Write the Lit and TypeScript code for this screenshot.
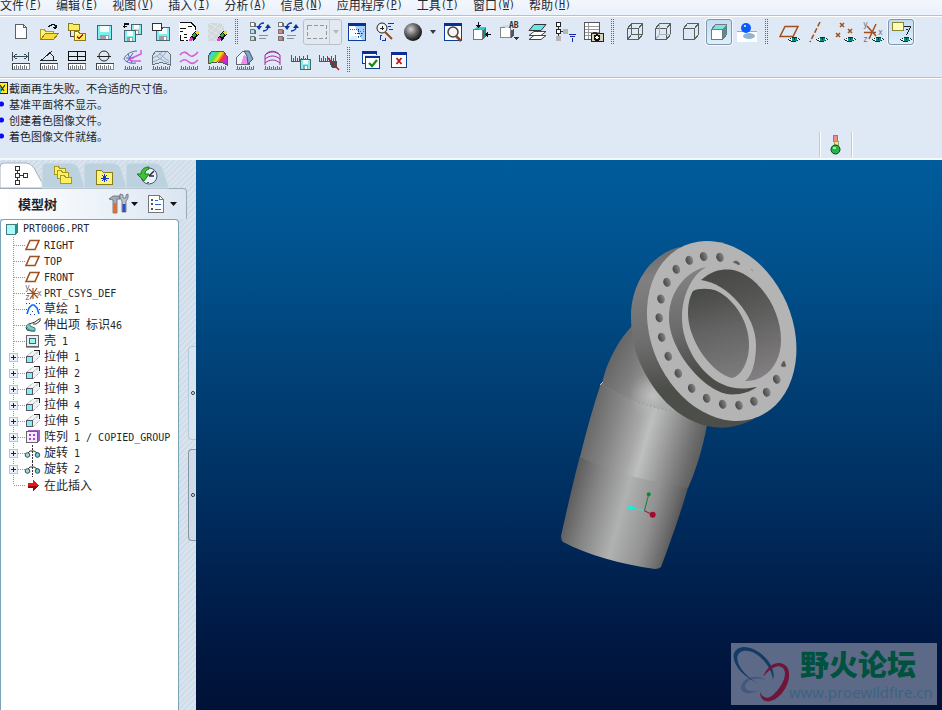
import { LitElement, html, svg, css } from "lit";
import { customElement } from "lit/decorators.js";
import { classMap } from "lit/directives/class-map.js";

/* ---------- shared pieces of the toolbar icons (20 x 20 grid) ---------- */

const disk = (x: number, y: number, s: number) => svg`
  <rect x=${x + 0.5} y=${y + 0.5} width=${s - 1} height=${s - 1} fill="#7ff0f2" stroke="#4f6468"/>
  <rect x=${x + 3} y=${y + 1} width=${s - 6} height=${Math.floor(s / 2) - 1} fill="#f4fbfb"/>
  <rect x=${x + 3} y=${y + s - 5} width=${s - 6} height="4" fill="#9a9fa3"/>
  <rect x=${x + s - 6} y=${y + s - 4} width="2" height="3" fill="#fff"/>`;

const eye = svg`
  <path d="M9 17h2v-1h2v-1h5v1h2v1h1v1h-2v1h-2v1h-5v-1h-2v-1h-1z" fill="#20282c"/>
  <path d="M10 17h2v-1h1v3h-1v-1h-2zM18 16h1v1h1v1h-2z" fill="#fff"/>
  <rect x="13" y="16" width="5" height="3" fill="#0d8f86"/>
  <rect x="15" y="16" width="1" height="2" fill="#063c3a"/>`;

const ruler = svg`
  <rect x="1.5" y="13.5" width="17" height="6" fill="#fff" stroke="#404448"/>
  <path d="M2 19.5h17M18.500 14v6" stroke="#8b8f93"/>
  <path d="M3.500 16v3M5.500 15v4M7.500 16v3M9.500 15v4M11.500 16v3M13.500 15v4M15.500 16v3" stroke="#777c80"/>`;

const smallRuler = svg`
  <path d="M1 19.500h18" stroke="#888"/>
  <path d="M2.500 16v3M4.500 17v2M6.500 16v3M8.500 17v2M10.500 16v3M12.500 17v2M14.500 16v3M16.500 17v2M18.500 16v3" stroke="#666b70"/>`;

const eraser = svg`
  <path d="M11 16l5-7 4 3-5 7z" fill="#111"/>
  <path d="M16 10l2-2 2 1v2l-2 2z" fill="#e8df2e"/>
  <path d="M13 14l2-3 2 2-2 3z" fill="#2fae3a"/>
  <path d="M10 17l2-2 2 2-2 2h-2z" fill="#e33ad0"/>`;

const windowFrame = svg`
  <rect x="1.500" y="1.500" width="17" height="17" fill="#fff" stroke="#0a3f9c"/>
  <rect x="1" y="1" width="18" height="3" fill="#0a2f9c"/>`;

const treeBlocks = (second: string) => svg`
  <rect x="1.500" y=".5" width="4" height="4" fill="#e8ffff" stroke="#777"/>
  <rect x="1.500" y="7.500" width="4" height="4" fill=${second} stroke="#777"/>
  <rect x="1.500" y="14.500" width="4" height="4" fill=${second} stroke="#777"/>
  <path d="M6.500 1v4M6.500 8v4M6.500 15v4" stroke="#26807c"/>
  <path d="M10 13.500h9M10 16.500h7" stroke="#8a9095"/>
  <g shape-rendering="auto"><path d="M10 5c0-2 2-4 5-4M19 5c0 2-2 4-5 4" fill="none" stroke="#0a35a0" stroke-width="1.600"/>
  <path d="M7 4h6l-3 4zM16 6h6l-3-4z" fill="#0a35a0"/></g>`;

const cube = (front: string, hidden = "") => svg`
  <path d="M2.500 6.500h11v11h-11zM2.500 6.500l4-5h11v11l-4 5M13.500 6.500l4-5" fill=${front} stroke="#5a5f5f"/>
  ${hidden ? svg`<path d="M6.500 2v10.500h11M6.500 12.500l-4 5" fill="none" stroke=${hidden}/>` : ""}`;

const icons: Record<string, unknown> = {
  new: svg`<path d="M4.500 2.500h8l3 3v11h-11z" fill="#fff" stroke="#5d6266"/><path d="M12.500 2.500v3h3" fill="none" stroke="#5d6266"/>`,
  open: svg`<path d="M1.500 17.500v-10h4l1 2h8v3" fill="#fdf27c" stroke="#b39a22"/>
    <path d="M1.500 17.500l5-6h13l-5 6z" fill="#f6dc3e" stroke="#8f8420"/>
    <path d="M9 4.500h1v-1h2v-1h3v1h1v2" fill="none" stroke="#111"/><path d="M13 5h5l-2 2h-1z" fill="#111"/><path d="M17 3v3" stroke="#111"/>`,
  folders: svg`<path d="M1.500 8.500v-7h4l1 1h6v6z" fill="#fbee62" stroke="#8b7a1c"/>
    <path d="M3.500 9v5.500h4" fill="none" stroke="#444"/>
    <path d="M7.500 18.500v-9h4l1 2h6v7z" fill="#fff" stroke="#8b7a1c"/>
    <rect x="9" y="12" width="9" height="6" fill="#ffee58"/>
    <path d="M10 14.500l2 2 4-4" stroke="#c01414" stroke-width="2" fill="none"/>`,
  save: disk(2, 3, 15),
  saveCopy: svg`${disk(8, 2, 11)}${disk(1, 8, 12)}<path d="M1.500 4v-2h4M1 1.500h5M0 4.500h4M1.500 6v-3" stroke="#111" fill="none"/>`,
  backup: svg`${disk(5, 5, 14)}<path d="M1.500 1.500h9v7h-9z" fill="#fff" stroke="#333"/><path d="M9 9l3-3" stroke="#333"/>`,
  erase: svg`<path d="M0 1h12l5 5v4l-7 9H0z" fill="#fff"/><path d="M1 .5h11l4 4v3M1 18.500h4M1 6.500h6M9 4.500h4M1 9.500h3M8 12.500h-3M1 13v5M7 18.500h2M5 15.500h3" fill="none" stroke="#111"/>${eraser}`,
  eraseAll: svg`<path d="M1 1h12l4 4v4l-8 10H1z" fill="#d3d8dc"/><path d="M1 1l16 8M1 6l12 8M1 11l8 7M12 1L1 12M16 4L1 18" stroke="#f1f4f6" stroke-dasharray="1 1" shape-rendering="auto"/>${eraser}`,
  treeA: treeBlocks("#8ff2f2"),
  treeB: treeBlocks("#f2747c"),
  sketch: svg`${windowFrame}<path d="M8 4h10v14h-3z" fill="#a8d0f6"/><path d="M3 7c5 0 11 2 14 4M9 16c5-1 8-4 8-9" stroke="#2b6fd8" fill="none" stroke-dasharray="1 1"/><path d="M11.500 7v6M8 11.500h7M9 14.500h4" stroke="#12326e" stroke-dasharray="1 1"/><path d="M4 14h6v4H3z" fill="#d7ecfc"/>`,
  spin: svg`<circle cx="7" cy="6" r="5" fill="#eef3f6" stroke="#222" shape-rendering="auto"/><path d="M5 6.500h4M7.500 4v4" stroke="#222"/><path d="M10 10l7 7" stroke="#8c4a20" stroke-width="2" shape-rendering="auto"/>
    <path d="M13 1.500h6M13 4.500h3M14 7.500h4M7 13.500h-2v4M7 18.500h4M10 19v-3" stroke="#1733b0" fill="none"/>`,
  sphere: svg`<circle cx="10" cy="10" r="9" fill="url(#ball)" shape-rendering="auto"/>
    <defs><radialGradient id="ball" cx=".38" cy=".35" r=".65"><stop offset="0" stop-color="#d4d4d4"/><stop offset=".5" stop-color="#6a6a6a"/><stop offset="1" stop-color="#141414"/></radialGradient></defs>`,
  refit: svg`${windowFrame}<circle cx="10" cy="10" r="5" fill="#f5f5f5" stroke="#444" stroke-width="1.500" shape-rendering="auto"/><path d="M13 14l5 5" stroke="#8c4a20" stroke-width="2.500" shape-rendering="auto"/>`,
  orient: svg`<path d="M2.500 7.500h9v10h-9z" fill="#fff" stroke="#777"/><path d="M3 7l3-2h9l-3 3z" fill="#35c8c4"/><path d="M12 8l3-3v9l-3 4z" fill="#178884"/><path d="M7.500 0v4M20 12.500h-4" stroke="#111"/><path d="M5 3h5l-2.500 3zM17 10v5l-3-2.500z" fill="#111"/>`,
  saved: svg`<path d="M1.500 5.500h10v10h-10z" fill="#fff" stroke="#888"/><path d="M2 5l3-2h6l-1 3z" fill="#cdd"/><path d="M12 8l3-1v6l-3 3z" fill="#4a5a58"/><text x="10" y="6" class="ab">AB</text><path d="M15 15h5l-2.500 3z" fill="#333"/>`,
  layers: svg`<path d="M2 17.500l5-4h12l-5 4zM2 13.500l5-4h12l-5 4z" fill="#fff" stroke="#444" shape-rendering="auto"/><path d="M2 8.500l5-6h12l-5 6z" fill="#66e6e6" stroke="#333" shape-rendering="auto"/>`,
  filter: svg`<path d="M3.500 4v12M4 9.500h5" stroke="#333"/><rect x="1.500" y=".5" width="4" height="4" fill="#fff" stroke="#222"/><rect x="1.500" y="7.500" width="4" height="4" fill="#fff" stroke="#222"/><rect x="8" y="7" width="5" height="5" fill="#b6b6b6"/><rect x="1" y="14" width="5" height="5" fill="#b6b6b6"/>
    <path d="M14 12.500h7M15 14.500h5M17 16.500h1M17.500 17v3" stroke="#1426a8"/>`,
  report: svg`<rect x="1.500" y=".5" width="15" height="17" fill="#fff" stroke="#555"/><path d="M5.500 1v16M2 4.500h14M2 7.500h14M2 10.500h14M2 13.500h14" stroke="#999"/>
    <rect x="8.500" y="11.500" width="12" height="8" fill="#d6d1b4" stroke="#222"/><circle cx="14" cy="15.500" r="2.500" fill="#fff" stroke="#111" stroke-width="1.500"/><rect x="10" y="10" width="4" height="2" fill="#333"/>`,
  wire: cube("none", "#5a5f5f"),
  hiddenLine: cube("none", "#a9b2ba"),
  noHidden: cube("none"),
  shaded: svg`<path d="M2.500 7.500h11v10h-11z" fill="#fff" stroke="#777"/><path d="M3 7l3-5h12l-4 5z" fill="#7fe3e3"/><path d="M14 7l4-5v10l-4 5z" fill="#3e9c98"/><path d="M2.500 7.500l4-5h11v10l-4 5" fill="none" stroke="#777"/>`,
  shadow: svg`<path d="M0 9h20v11H0z" fill="#fff"/><path d="M0 9.500h20" stroke="#aaa"/><ellipse cx="12" cy="14" rx="6" ry="3" fill="#8fb4d4" shape-rendering="auto"/><circle cx="9" cy="6" r="5" fill="#0a5cff" shape-rendering="auto"/><circle cx="8" cy="4" r="1.500" fill="#b8dcff"/>`,
  planes: svg`<path d="M1 14.500L6 4.500h13l-5 10z" fill="none" stroke="#a0501e" stroke-width="1.500" shape-rendering="auto"/>${eye}`,
  axisLines: svg`<path d="M13 0L3 20" stroke="#a0501e" stroke-width="1.600" stroke-dasharray="5 2" shape-rendering="auto"/>${eye}`,
  points: svg`<path d="M5 1l4 4M9 1l-4 4M1 11l4 4M5 11l-4 4M13 7l4 4M17 7l-4 4" stroke="#a0501e" stroke-width="1.500" shape-rendering="auto"/>${eye}`,
  csys: svg`<path d="M1 10.500h12M4 4l9 10M13 2L6 17" stroke="#a0501e" stroke-width="1.500" shape-rendering="auto"/><text x="0" y="5" class="axis">y</text><text x="15" y="13" class="axis">x</text><text x="0" y="20" class="axis">z</text>${eye}`,
  annotation: svg`<rect x="1.500" y=".5" width="11" height="8" fill="#ffffb4" stroke="#8b8430"/><path d="M13 4.500h7M19.500 5l-4 8M15 7.500h2" stroke="#222" fill="none"/>${eye}`,
  distance: svg`${ruler}<path d="M1.500 2v9M17.500 2v9M3 6.500h13M5.500 4l-3 2.500 3 2.500M13.500 4l3 2.500-3 2.500" fill="none" stroke="#3a4a56"/>`,
  angle: svg`${ruler}<path d="M13 1L2 10.500h16M11 3c3 2 4 4 4 7" fill="none" stroke="#222"/>`,
  area: svg`${ruler}<path d="M1.500 1.500h17v9h-17zM10 1v9M2 6h17M4 6h4M12 6h5" fill="none" stroke="#111"/>`,
  diameter: svg`${ruler}<circle cx="9" cy="6" r="5" fill="none" stroke="#222" shape-rendering="auto"/><path d="M2 6.500h14" stroke="#222"/>`,
  curveNodes: svg`<path d="M14 1c-6 0-12 4-13 8 2 3 6 5 12 4M5 4l4 9M10 3l-6 9M3 8h8" fill="none" stroke="#4a68a8" shape-rendering="auto"/><path d="M18 0v4l-9 4-3 2 4 1h8" fill="none" stroke="#d45ce0" stroke-width="1.500" shape-rendering="auto"/>${smallRuler}`,
  curvature: svg`<path d="M1 15V6l4-5h11l3 3v11c-6-3-12-3-18 0z" fill="#d5e2ee" stroke="#68727c"/><path d="M2 8c5-3 7-3 9-6M2 12c8-3 9-5 13-10M8 3c3 3 6 6 10 8M6 6c4 4 8 6 12 7" fill="none" stroke="#8fa6c6" shape-rendering="auto"/>${smallRuler}`,
  sections: svg`<path d="M1 5c4-5 7-2 9 0s5 2 9-3M1 12c4-4 7-2 9 0s5 2 9-2" fill="none" stroke="#d15fd6" stroke-width="1.600" shape-rendering="auto"/>${smallRuler}`,
  rainbow: svg`<defs><linearGradient id="rb" x1="0" y1="0" x2="1" y2=".5"><stop offset="0" stop-color="#2a52ff"/><stop offset=".25" stop-color="#2fe0e8"/><stop offset=".45" stop-color="#58e03a"/><stop offset=".62" stop-color="#f6e52a"/><stop offset=".8" stop-color="#f23a22"/><stop offset="1" stop-color="#c42be0"/></linearGradient></defs>
    <path d="M1 14V6l4-5h11l4 5v9c-6-4-12-4-19-1z" fill="url(#rb)" stroke="#555"/>${smallRuler}`,
  draft: svg`<path d="M1 14V8l7-7h6v13z" fill="#eef4fa" stroke="#667"/><path d="M6 14l3-9 3 3 1 6z" fill="#ee8cf0"/><path d="M9 1l5 0 4 8-5 5-1-8z" fill="#7fa6cc" stroke="#456" shape-rendering="auto"/>${smallRuler}`,
  stripes: svg`<path d="M2 15V5c4-5 11-5 15 0v10M2 5c5-4 10-4 15 0M2 9c5-4 10-4 15 0M2 13c5-4 10-4 15 0" fill="none" stroke="#a2289c" shape-rendering="auto"/>${smallRuler}`,
  savedMeasure: svg`<path d="M.5 5v6M2.500 8v3M4.500 6v5M6.500 8v3M8.500 6v5M10.500 8v3M12.500 6v5M14.500 8v3M16.500 5v6M0 11.500h12" stroke="#555"/>${disk(9, 9, 11)}`,
  hideMeasure: svg`<path d="M.5 5v6M2.500 8v3M4.500 6v5M6.500 8v3M8.500 6v5M10.500 8v3M12.500 6v5M14.500 8v3M16.500 5v6M0 11.500h12" stroke="#555"/><path d="M10 11h8v7h-5z" fill="#33555c"/><path d="M9 8l11 12" stroke="#b0202a" stroke-width="1.500" shape-rendering="auto"/>`,
  windows: svg`<path d="M1.500 1.500h14v12h-14z" fill="#fff" stroke="#0a3f9c"/><path d="M1 2h15" stroke="#0a2f9c" stroke-width="3"/><path d="M4.500 7.500h14v11h-14z" fill="#fff" stroke="#0a3f9c"/><path d="M3 5.500h17" stroke="#dee9f5"/><path d="M4 7h15" stroke="#0a2f9c" stroke-width="2"/><path d="M8 13l3 3 5-6" fill="none" stroke="#178a12" stroke-width="2.200" shape-rendering="auto"/>`,
  closeWindow: svg`<path d="M2.500 3.500h15v14h-15z" fill="#fff" stroke="#0a3f9c"/><path d="M2 3.500h16" stroke="#0a2f9c" stroke-width="3"/><path d="M7.500 8l5 6M12.500 8l-5 6" stroke="#b8141c" stroke-width="1.800" shape-rendering="auto"/>`,
};

/* ---------- model tree icons (16 x 16 grid) ---------- */

const treeIcons: Record<string, unknown> = {
  part: svg`<path d="M2 4l3-2h9v9l-3 3z" fill="#2c8a88"/><path d="M2 4l2-2h9l-2 2z" fill="#e9ffff"/><rect x="2.500" y="3.500" width="9" height="10" fill="#a6fafa" stroke="#4a7a7c"/>`,
  plane: svg`<path d="M1 12.500L5 3.500h9l-4 9z" fill="none" stroke="#a0501e" stroke-width="1.600" shape-rendering="auto"/>`,
  csys: svg`<path d="M8 3v11M2 8.500h11M4 4l9 9M12 3L5 14" stroke="#a0501e" stroke-width="1.200" shape-rendering="auto"/><text x="0" y="5" class="axis">y</text><text x="12" y="11" class="axis">x</text><text x="0" y="15" class="axis">z</text>`,
  sketch: svg`<path d="M2 13l2-6 3-3h2l3 3 2 6" fill="none" stroke="#0a6cf0" stroke-width="1.600" shape-rendering="auto"/><path d="M1 2.500h1M14 2.500h1M5 13.500h1M9 13.500h1M1 8.500h1M14 8.500h1M4 2.500h1M11 2.500h1M7 10.500h1" stroke="#1a3fa8"/>`,
  sweep: svg`<path d="M15 1v3l-4 3H8M10 14H6l-4-1-1-3 3-3 6-2 4-3" fill="none" stroke="#333" shape-rendering="auto"/><path d="M1 9l4-3v3l5 2v3l-6-1z" fill="#66d6d4" stroke="#4a7a7c" shape-rendering="auto"/>`,
  shell: svg`<rect x="1.500" y="2.500" width="12" height="11" fill="#e9eef0" stroke="#666"/><rect x="4.500" y="5.500" width="6" height="5" fill="#9cf4f4" stroke="#3f6a6c"/><path d="M1 14.500h13" stroke="#999"/>`,
  extrude: svg`<path d="M1 7l7-5h7v5l-7 7z" fill="#edf4f5"/><path d="M2 7l6-5M8 7l6-5M8 14l7-7" stroke="#888" stroke-dasharray="1 1" shape-rendering="auto"/><path d="M9 1.500h5.500V6" fill="none" stroke="#222"/><rect x="1.500" y="7.500" width="6" height="6" fill="#86f0f0" stroke="#556"/>`,
  pattern: svg`<path d="M2 2.500L4 1h11v10l-2 3z" fill="#a060c8"/><rect x="1.500" y="2.500" width="11" height="11" fill="#f7ecfc" stroke="#666"/><path d="M4 5h2v2H4zM8 5h2v2H8zM4 9h2v2H4zM8 9h2v2H8z" fill="#a040e8"/>`,
  revolve: svg`<path d="M7.500 0v16" stroke="#333" stroke-dasharray="2 1"/><path d="M2 9l3-3h4l5 3" fill="none" stroke="#333" shape-rendering="auto"/><circle cx="2.500" cy="10" r="2.300" fill="#9adfe0" stroke="#445" shape-rendering="auto"/><circle cx="12.500" cy="10" r="2.300" fill="#5fd3d4" stroke="#445" shape-rendering="auto"/>`,
  insert: svg`<path d="M3 6h5V2l6 6.500L8 14v-3H3z" fill="#f01414"/><path d="M3 9h10L8 14v-3H3z" fill="#9a0808"/>`,
};

/* Latin runs are set in the monospaced face, hanzi in the CJK one. */
const mixed = (text: string) =>
  text
    .split(/([\x20-\x7e]+)/)
    .filter((run) => run !== "")
    .map((run) => (/^[\x20-\x7e]/.test(run) ? html`<span class="latin">${run}</span>` : run));

const menus: [string, string][] = [
  ["文件", "F"], ["编辑", "E"], ["视图", "V"], ["插入", "I"], ["分析", "A"],
  ["信息", "N"], ["应用程序", "P"], ["工具", "T"], ["窗口", "W"], ["帮助", "H"],
];

const rowOne: [string, string][][] = [
  [["new", "新建"], ["open", "打开"], ["folders", "工作目录"], ["save", "保存"], ["saveCopy", "保存副本"], ["backup", "备份"], ["erase", "拭除"], ["eraseAll", "拭除不显示"]],
  [["treeA", "再生"], ["treeB", "再生管理器"], ["split", "选取"], ["sketch", "重画"], ["spin", "旋转中心"], ["sphere", "外观"], ["arrow", "外观库"], ["refit", "重新调整"], ["orient", "重定向"], ["saved", "已命名视图"], ["layers", "层"], ["filter", "视图管理器"], ["report", "捕获"]],
  [["wire", "线框"], ["hiddenLine", "隐藏线"], ["noHidden", "无隐藏线"], ["shaded", "着色"], ["shadow", "增强的真实感"]],
  [["planes", "基准平面"], ["axisLines", "基准轴"], ["points", "基准点"], ["csys", "坐标系"], ["annotation", "注释"]],
];

const rowTwo: [string, string][][] = [
  [["distance", "距离"], ["angle", "角"], ["area", "面积"], ["diameter", "直径"], ["curveNodes", "曲率"], ["curvature", "曲面"], ["sections", "截面"], ["rainbow", "着色曲率"], ["draft", "拔模"], ["stripes", "斜率"], ["savedMeasure", "已保存分析"], ["hideMeasure", "全部隐藏"]],
  [["windows", "激活窗口"], ["closeWindow", "关闭窗口"]],
];

const pressed = new Set(["shaded", "annotation"]);

const messages = [
  { kind: "warn", text: "截面再生失败。不合适的尺寸值。" },
  { kind: "info", text: "基准平面将不显示。" },
  { kind: "info", text: "创建着色图像文件。" },
  { kind: "info", text: "着色图像文件就绪。" },
];

const features: { icon: string; label: string; group?: boolean }[] = [
  { icon: "plane", label: "RIGHT" },
  { icon: "plane", label: "TOP" },
  { icon: "plane", label: "FRONT" },
  { icon: "csys", label: "PRT_CSYS_DEF" },
  { icon: "sketch", label: "草绘 1" },
  { icon: "sweep", label: "伸出项 标识46" },
  { icon: "shell", label: "壳 1" },
  { icon: "extrude", label: "拉伸 1", group: true },
  { icon: "extrude", label: "拉伸 2", group: true },
  { icon: "extrude", label: "拉伸 3", group: true },
  { icon: "extrude", label: "拉伸 4", group: true },
  { icon: "extrude", label: "拉伸 5", group: true },
  { icon: "pattern", label: "阵列 1 / COPIED_GROUP", group: true },
  { icon: "revolve", label: "旋转 1", group: true },
  { icon: "revolve", label: "旋转 2", group: true },
  { icon: "insert", label: "在此插入" },
];

const base = css`
  * { box-sizing: border-box; }
  button { margin: 0; padding: 0; border: 0; background: none; font: inherit; color: inherit; }
  svg { display: block; }
  .latin { font-family: "DejaVu Sans Mono", monospace; font-size: 10px; white-space: pre; }
  .axis { font: 8px "DejaVu Sans Mono", monospace; fill: #6c7074; }
  .ab { font: bold 8px "DejaVu Sans Mono", monospace; fill: #333; }
`;

@customElement("menu-bar")
export class MenuBar extends LitElement {
  static styles = [base, css`
    :host { display: block; border-bottom: 1px solid #a5c6dc; background: linear-gradient(#f3f6fd, #eaf1fa); }
    nav { display: flex; align-items: flex-start; gap: 14px; height: 15px; }
    button { display: flex; font-size: 12px; line-height: 10px; color: #222a32; white-space: nowrap; }
  `];

  render() {
    return html`<nav>
      ${menus.map(([name, key]) => html`<button>${name}<span class="latin">(<u>${key}</u>)</span></button>`)}
    </nav>`;
  }
}

@customElement("tool-bar")
export class ToolBar extends LitElement {
  static styles = [base, css`
    :host { display: block; padding: 1px 0 3px 7px; border-top: 1px solid #fff; border-bottom: 1px solid #a5c6dc; background: #dee9f5; }
    .row { display: flex; height: 28px; }
    .tool { display: grid; place-items: center; flex: none; width: 28px; height: 28px; }
    .tool svg { overflow: visible; }
    .pressed { width: 26px; height: 26px; margin: 1px; border: 1px solid #8597a6; border-radius: 3px; background: linear-gradient(#c2ddf4, #dceffd); box-shadow: 0 0 0 1px #f4f9fd; }
    .grip { flex: none; width: 3px; height: 27px; margin: 0 7px 0 4px;
      background: repeating-linear-gradient(#dee9f5 0 1px, transparent 1px 2px), linear-gradient(90deg, #3f7396 1px, transparent 1px 2px, #3f7396 2px); }
    .split { display: flex; flex: none; width: 39px; height: 26px; margin: 1px 1px 1px 2px; border: 1px solid #b9c1c8; border-radius: 3px; background: #e2e9f0; }
    .split button { display: grid; place-items: center; width: 25px; }
    .split .more { width: 12px; border-left: 1px solid #c6cdd3; }
    .arrow { display: grid; place-items: center; flex: none; width: 12px; }
  `];

  private tool([name, label]: [string, string]) {
    const down = svg`<path d="M0 0h6L3 4z" fill=${name === "split" ? "#b4bac0" : "#333a44"}/>`;
    if (name === "split") {
      return html`<span class="split">
        <button aria-label=${label}><svg width="20" height="14"><rect x=".5" y=".5" width="19" height="13" fill="none" stroke="#8f989f" stroke-dasharray="4 2" shape-rendering="crispEdges"/></svg></button>
        <button class="more" aria-label="更多"><svg width="6" height="4">${down}</svg></button>
      </span>`;
    }
    if (name === "arrow") {
      return html`<button class="arrow" aria-label=${label}><svg width="6" height="4">${down}</svg></button>`;
    }
    return html`<button class=${classMap({ tool: true, pressed: pressed.has(name) })} aria-label=${label}>
      <svg width="20" height="20" shape-rendering="crispEdges">${icons[name]}</svg>
    </button>`;
  }

  private row(groups: [string, string][][]) {
    return html`<div class="row">
      ${groups.map((group, i) => html`${i ? html`<span class="grip"></span>` : ""}${group.map((t) => this.tool(t))}`)}
    </div>`;
  }

  render() {
    return html`${this.row(rowOne)}${this.row(rowTwo)}`;
  }
}

@customElement("message-log")
export class MessageLog extends LitElement {
  static styles = [base, css`
    :host { display: flex; justify-content: space-between; align-items: flex-end; min-height: 82px; border-top: 1px solid #fff; border-bottom: 2px solid #f4f8fb; background: #dee9f5; box-sizing: border-box; }
    ul { align-self: flex-start; margin: 0; padding: 1px 0 0; list-style: none; }
    li { display: flex; align-items: center; gap: 1px; height: 16px; font-size: 11px; line-height: 16px; color: #1c252c; }
    .light { display: grid; place-items: center; width: 33px; height: 25px; margin: 0 90px 1px 0; border: solid #bccbd8; border-width: 0 1px; box-shadow: 1px 0 #fff, inset 1px 0 #fff; }
  `];

  render() {
    return html`
      <ul>
        ${messages.map((m) => html`<li>
          <svg width="8" height="12" shape-rendering="crispEdges">
            ${m.kind === "warn"
              ? svg`<rect x="-4" y=".5" width="11" height="11" fill="#ffee22" stroke="#222"/><path d="M0 3l4 6M5 3L0 10" stroke="#222" stroke-width="1.200" shape-rendering="auto"/><path d="M0 5v6" stroke="#2bb8c8" stroke-width="2"/>`
              : svg`<circle cx="1.500" cy="6" r="2.500" fill="#0a0af0" shape-rendering="auto"/>`}
          </svg><span>${m.text}</span></li>`)}
      </ul>
      <span class="light"><svg width="12" height="20" shape-rendering="crispEdges">
        <rect x="3.500" y=".5" width="4" height="6" fill="#f08a90" stroke="#8a8080"/><rect x="4" y="6" width="4" height="4" fill="#ffee22" stroke="#888" stroke-width=".8"/>
        <circle cx="5.500" cy="14.500" r="4.500" fill="#25b64a" stroke="#0c3d18" shape-rendering="auto"/><circle cx="4.500" cy="13" r="1.300" fill="#9df0ae"/>
      </svg></span>`;
  }
}

@customElement("model-navigator")
export class ModelNavigator extends LitElement {
  static styles = [base, css`
    :host { display: flex; width: 196px; flex: none; padding-top: 3px; background: repeating-linear-gradient(135deg, #d9e4ef 0 2px, #cfdce9 2px 4px); }
    .panel { display: flex; flex-direction: column; width: 187px; flex: none; }
    .tabs { display: flex; height: 25px; }
    .tabs button { width: 42px; height: 25px; }
    .tabs svg { position: relative; overflow: visible; }
    header { display: flex; align-items: center; height: 31px; padding-left: 18px; border: solid #9aabb8; border-width: 1px 1px 0 0; border-top-right-radius: 4px; background: linear-gradient(90deg, #fff, #f2f6fb 40%, #dae5f1); }
    h2 { flex: none; width: 91px; margin: 0; font-size: 13px; line-height: 20px; font-weight: 700; color: #1d2329; }
    .menu { display: flex; align-items: center; gap: 4px; margin-right: 10px; }
    .tree { flex: 1; width: 179px; margin: 0; padding: 1px 0 0; list-style: none; border: 1px solid #7ba3b8; border-bottom: 0; border-radius: 4px 4px 0 0; background: #fff; }
    .tree li { display: flex; align-items: center; height: 16px; font-size: 12px; line-height: 16px; color: #1e282e; white-space: nowrap; }
    .tree li > svg { flex: none; margin-right: 3px; overflow: visible; }
    .root { padding-left: 3px; }
    .branch { flex: none; width: 24px; height: 16px; }
    .splitter { display: flex; flex-direction: column; flex: 1; gap: 9px; padding-top: 183px; }
    .splitter button { display: grid; place-items: center; height: 94px; margin-left: 1px; border: 1px solid #b4c9dc; border-right: 0; border-radius: 4px 0 0 4px; background: #d8e4f0; }
    .splitter .close { height: 92px; border-color: #8698a8; background: #cfdce8; }
  `];

  private tab(name: string, active: boolean, icon: unknown) {
    return html`<button role="tab" aria-label=${name} aria-selected=${active}>
      <svg width="42" height="25">
        <path d=${active ? "M0 25V4q0-4 4-4h22q5 0 8 5l11 20z" : "M0 25V4q0-4 4-4h24q6 0 9 6l6 19z"} fill=${active ? "#fff" : "#bdd2df"} stroke=${active ? "#a3b1bc" : "#d3dfe9"}/>
        ${icon}
      </svg></button>`;
  }

  private branch(group: boolean, last: boolean) {
    return svg`
      <path d=${last ? "M12.500 0v8" : "M12.500 0v16"} stroke="#8e9499" stroke-dasharray="1 1"/>
      <path d="M13 8.500h11" stroke="#8e9499" stroke-dasharray="1 1"/>
      ${group ? svg`<rect x="8.500" y="4.500" width="8" height="8" fill="#eaf3fb" stroke="#b4c6d6"/><path d="M10 8.500h5M12.500 6v5" stroke="#222"/>` : ""}`;
  }

  render() {
    const folder = (x: number, y: number) => svg`<path d="M${x}.5 ${y + 8}.5v-8h4l1 2h6v6z" fill="#fdf25e" stroke="#a8982c"/>`;
    const down = html`<svg width="7" height="4"><path d="M0 0h7L3.500 4z" fill="#111"/></svg>`;
    return html`
      <section class="panel">
        <div class="tabs" role="tablist">
          ${this.tab("模型树", true, svg`<g fill="#fff" stroke="#333" shape-rendering="crispEdges"><path d="M17.500 4v16M18 12.500h5" /><rect x="15.500" y="3.500" width="4" height="4"/><rect x="15.500" y="10.500" width="4" height="4"/><rect x="15.500" y="17.500" width="4" height="4"/><rect x="23.500" y="10.500" width="4" height="4"/></g>`)}
          ${this.tab("文件夹浏览器", false, svg`<g shape-rendering="crispEdges">${folder(12, 3)}${folder(15, 7)}${folder(18, 12)}</g>`)}
          ${this.tab("收藏夹", false, svg`<g shape-rendering="crispEdges"><path d="M12.500 21.500v-14h5l2 2h9v12z" fill="#fdf47a" stroke="#8a7a1a"/><path d="M20.500 11v8M17 15h8M18 12l5 6M23 12l-5 6" stroke="#1438c8"/></g>`)}
          ${this.tab("历史记录", false, svg`<circle cx="23" cy="13" r="8" fill="#e8f2f6" stroke="#557"/><path d="M23 13l5-5M23 13h5M22 19v1" stroke="#234" stroke-width="1.500"/><path d="M23 4c-6 0-8 4-8 7h-4l7 7 5-7h-4c0-3 1-4 4-5z" fill="#3fc23a" stroke="#1a7a1c"/>`)}
        </div>
        <header>
          <h2>模型树</h2>
          <button class="menu" aria-label="设置"><svg width="18" height="20" overflow="visible">
            <path d="M0 5l4-3h7v3H8v14H4V6z" fill="#a3adb3" stroke="#667" stroke-width=".8"/><path d="M4.500 9h3v10h-3z" fill="#ee6a20"/>
            <path d="M11 0v4l2 3v11h4V7l2-3V0l-2 1v3h-3V1z" fill="#b8c4cc" stroke="#667" stroke-width=".8"/><path d="M13.500 10h3v8h-3z" fill="#2a50c0"/></svg>${down}</button>
          <button class="menu" aria-label="显示"><svg width="18" height="20" shape-rendering="crispEdges">
            <path d="M.5 1.500h11l4 4v13H.5z" fill="#fff" stroke="#777"/><path d="M11.500 1.500v4h4" fill="none" stroke="#777"/><path d="M3 5h2v2H3zM3 9h2v2H3zM3 14h2v2H3z" fill="#456"/><path d="M7 6.500h3M7 10.500h6M7 15.500h6" stroke="#2a66d0"/></svg>${down}</button>
        </header>
        <ul class="tree">
          <li class="root"><svg width="16" height="16" shape-rendering="crispEdges">${treeIcons.part}</svg>${mixed("PRT0006.PRT")}</li>
          ${features.map((f, i) => {
            const lines = html`<svg width="24" height="16" shape-rendering="crispEdges">${this.branch(!!f.group, i === features.length - 1)}</svg>`;
            return html`<li>
              ${f.group ? html`<button class="branch" aria-label="展开 ${f.label}">${lines}</button>` : html`<span class="branch">${lines}</span>`}
              <svg width="16" height="16" shape-rendering="crispEdges">${treeIcons[f.icon]}</svg><span>${mixed(f.label)}</span>
            </li>`;
          })}
        </ul>
      </section>
      <div class="splitter">
        ${["open", "close"].map((n) => html`<button class=${n} aria-label=${n === "open" ? "展开面板" : "收起面板"}><svg width="4" height="4"><circle cx="2" cy="2" r="1.500" fill="#fff" stroke="#333"/></svg></button>`)}
      </div>`;
  }
}

const holes = [
  [703.7, 256.5], [720, 257.3], [689.3, 260.3], [676.3, 269.3], [667, 282.3], [661, 299], [659.3, 317.7],
  [661.7, 337.3], [668.3, 356.3], [678.3, 373.3], [691.7, 388.3], [706.7, 398.3], [722.7, 404.3],
  [739, 405.3], [754, 401.3], [766.7, 392.3], [776.7, 379.3],
];

@customElement("model-view")
export class ModelView extends LitElement {
  static styles = [base, css`
    :host { position: relative; display: block; flex: 1; min-width: 0; overflow: hidden;
      background: linear-gradient(#005c9c, #00508b 20%, #003e73 42%, #002e60 62%, #001c48 82%, #001136); }
    .scene { width: 100%; height: 100%; }
    .badge { position: absolute; right: 5px; bottom: 5px; display: flex; width: 206px; height: 62px; background: #5c6a88; }
    .logo { flex: none; }
    .words { display: flex; flex-direction: column; align-items: flex-start; }
    .title { margin-left: 11px; font: 900 29px/40px "Noto Sans CJK SC", sans-serif; color: #00523e; white-space: nowrap; }
    .url { font: 15px/18px "Open Sans", sans-serif; color: #3a6380; text-decoration: none; }
  `];

  render() {
    return html`
      <svg class="scene" viewBox="196 160 746 550" role="img" aria-label="PRT0006">
        <defs>
          <linearGradient id="pipe" gradientUnits="userSpaceOnUse" x1="591" y1="420" x2="699" y2="451">
            <stop offset="0" stop-color="#6a6a6a"/><stop offset=".2" stop-color="#858585"/><stop offset=".42" stop-color="#a8a8a8"/><stop offset=".52" stop-color="#bcc0be"/><stop offset=".7" stop-color="#9b9b9b"/><stop offset=".9" stop-color="#727272"/><stop offset="1" stop-color="#606060"/>
          </linearGradient>
          <linearGradient id="foot" gradientUnits="userSpaceOnUse" x1="569" y1="500" x2="676" y2="530">
            <stop offset="0" stop-color="#5e5e5e"/><stop offset=".2" stop-color="#848484"/><stop offset=".48" stop-color="#b0b1b1"/><stop offset=".75" stop-color="#929292"/><stop offset=".92" stop-color="#6c6c6c"/><stop offset="1" stop-color="#565656"/>
          </linearGradient>
          <linearGradient id="elbow" gradientUnits="userSpaceOnUse" x1="604" y1="355" x2="680" y2="395">
            <stop offset="0" stop-color="#5f5f5f"/><stop offset=".35" stop-color="#7b7b7b"/><stop offset=".7" stop-color="#a0a0a0"/><stop offset="1" stop-color="#a6a6a6"/>
          </linearGradient>
          <radialGradient id="glow" gradientUnits="userSpaceOnUse" cx="653" cy="396" r="24">
            <stop offset="0" stop-color="#c0c2c1"/><stop offset="1" stop-color="#b0b0b0" stop-opacity="0"/>
          </radialGradient>
          <linearGradient id="rim" gradientUnits="userSpaceOnUse" x1="660" y1="250" x2="690" y2="420">
            <stop offset="0" stop-color="#6c6b6c"/><stop offset=".15" stop-color="#817f81"/><stop offset=".5" stop-color="#6f6f6f"/><stop offset=".8" stop-color="#4c4e4a"/>
          </linearGradient>
          <linearGradient id="collar" gradientUnits="userSpaceOnUse" x1="680" y1="270" x2="720" y2="394">
            <stop offset="0" stop-color="#858385"/><stop offset=".45" stop-color="#6a6a6a"/><stop offset=".8" stop-color="#4b4d49"/>
          </linearGradient>
          <linearGradient id="bore" gradientUnits="userSpaceOnUse" x1="725" y1="270" x2="765" y2="380">
            <stop offset="0" stop-color="#484a46"/><stop offset=".3" stop-color="#555553"/><stop offset="1" stop-color="#848184"/>
          </linearGradient>
          <linearGradient id="inner" gradientUnits="userSpaceOnUse" x1="705" y1="289" x2="730" y2="378">
            <stop offset="0" stop-color="#484a46"/><stop offset=".45" stop-color="#636363"/><stop offset="1" stop-color="#7d7b7d"/>
          </linearGradient>
          <linearGradient id="hole"><stop offset="0" stop-color="#444642"/><stop offset="1" stop-color="#858585"/></linearGradient>
        </defs>
        <path d="M580 456C612 470 652 478 688.500 486C680 515 669 546 661 567Q659 569 655 569C620 564 588 555 563 542Q561 540 561 536C567 509 573 483 580 456z" fill="url(#foot)"/>
        <path d="M632 326C620 338 606 362 602 384L640 410 700 424 660 340z" fill="url(#elbow)"/>
        <path d="M601 383C622 397 650 408 680 413L707 425C703 446 697 468 688 488C652 482 612 473 580 457C586 432 593 407 601 383z" fill="url(#pipe)"/>
        <circle cx="653" cy="396" r="24" fill="url(#glow)"/>
        <path d="M603 385C622 398 650 408 678 412" fill="none" stroke="#8a8a8a" stroke-dasharray="1 3"/>
        <path d="M600 385l3-3" stroke="#c4c4c4"/>
        <path d="M680 247C650 254 631 284 631 317C631 333 634 350 640 363C654 395 682 427 722 427.700C733 427.500 744 424 754 419L740 330z" fill="url(#rim)"/>
        <ellipse rx="93.200" ry="70.700" transform="translate(721.7 331) rotate(66.5)" fill="#b4b4b4"/>
        ${holes.map(([x, y]) => svg`<ellipse cx=${x} cy=${y} rx="3.700" ry="4.600" transform="rotate(-20 ${x} ${y})" fill="url(#hole)"/>`)}
        <path d="M733 262q4-3 7 2l-1 1zM751 269l2 2M781 366q3-8 4-3l1 3-2 1z" fill="#5a5a5a" stroke="#666" stroke-width=".5"/>
        <path d="M706 267C690 270 669 288 669 318C669 350 705 394 732 394.500C742 394.500 752 391 757 387C745 389 735 390 722 384C700 374 682 345 682 318C682 295 692 275 706 267z" fill="url(#collar)"/>
        <path d="M701 280C712 270 722 269 730 269.500C754 272 781 305 781 340C781 362 768 381 745 381z" fill="url(#bore)"/>
        <path d="M697 281L701 280C727 283 756 315 756 345C756 362 752 376 745 381L735 383 700 350z" fill="#b4b4b4"/>
        <path d="M693 291C698 288 710 288 717 291C735 300 749 322 749 345C749 362 741 376 732 378C713 374 688 342 688 313C688 303 690 296 693 291z" fill="url(#inner)"/>
        <path d="M644.500 510.500L648.500 495" stroke="#15803a"/><path d="M644 510.500L630 507.700" stroke="#12f0dc"/><path d="M644 510.500L652 514.500" stroke="#a00a30"/>
        <circle cx="648.700" cy="494.300" r="2" fill="#15803a"/><circle cx="630.500" cy="507.700" r="2.500" fill="#12f0dc"/><circle cx="652.700" cy="514.700" r="3" fill="#a00a30"/>
      </svg>
      <div class="badge">
        <svg class="logo" width="58" height="62">
          <path d="M29 34C16 32 9 40 10 46C12 51 19 52 29 47C20 50 14 47 14 43C16 37 22 34 35 37z" fill="#45587c"/>
          <path d="M42 37C46 22 28 4 13 4C-3 5 0 24 19 36L28 41C10 32-1 12 12 8C24 5 41 22 42 37z" fill="#143a66"/>
          <path d="M32 34C36 24 42 20 48 20C60 21 60 34 55 44C50 54 40 60 35 58C30 57 29 52 29 49C32 56 38 57 44 50C52 42 57 30 52 25C46 20 38 27 32 34z" fill="#701438"/>
        </svg>
        <div class="words">
          <span class="title">野火论坛</span>
          <a class="url" href="#home">www.proewildfire.cn</a>
        </div>
      </div>`;
  }
}

@customElement("app-root")
export class AppRoot extends LitElement {
  static styles = css`
    :host { display: flex; flex-direction: column; min-height: 100vh; font-family: "Noto Sans CJK SC", "Liberation Sans", sans-serif; background: #dee9f5; }
    .work { display: flex; flex: 1; min-height: 0; }
  `;

  render() {
    return html`
      <menu-bar></menu-bar>
      <tool-bar></tool-bar>
      <message-log></message-log>
      <div class="work"><model-navigator></model-navigator><model-view></model-view></div>`;
  }
}
